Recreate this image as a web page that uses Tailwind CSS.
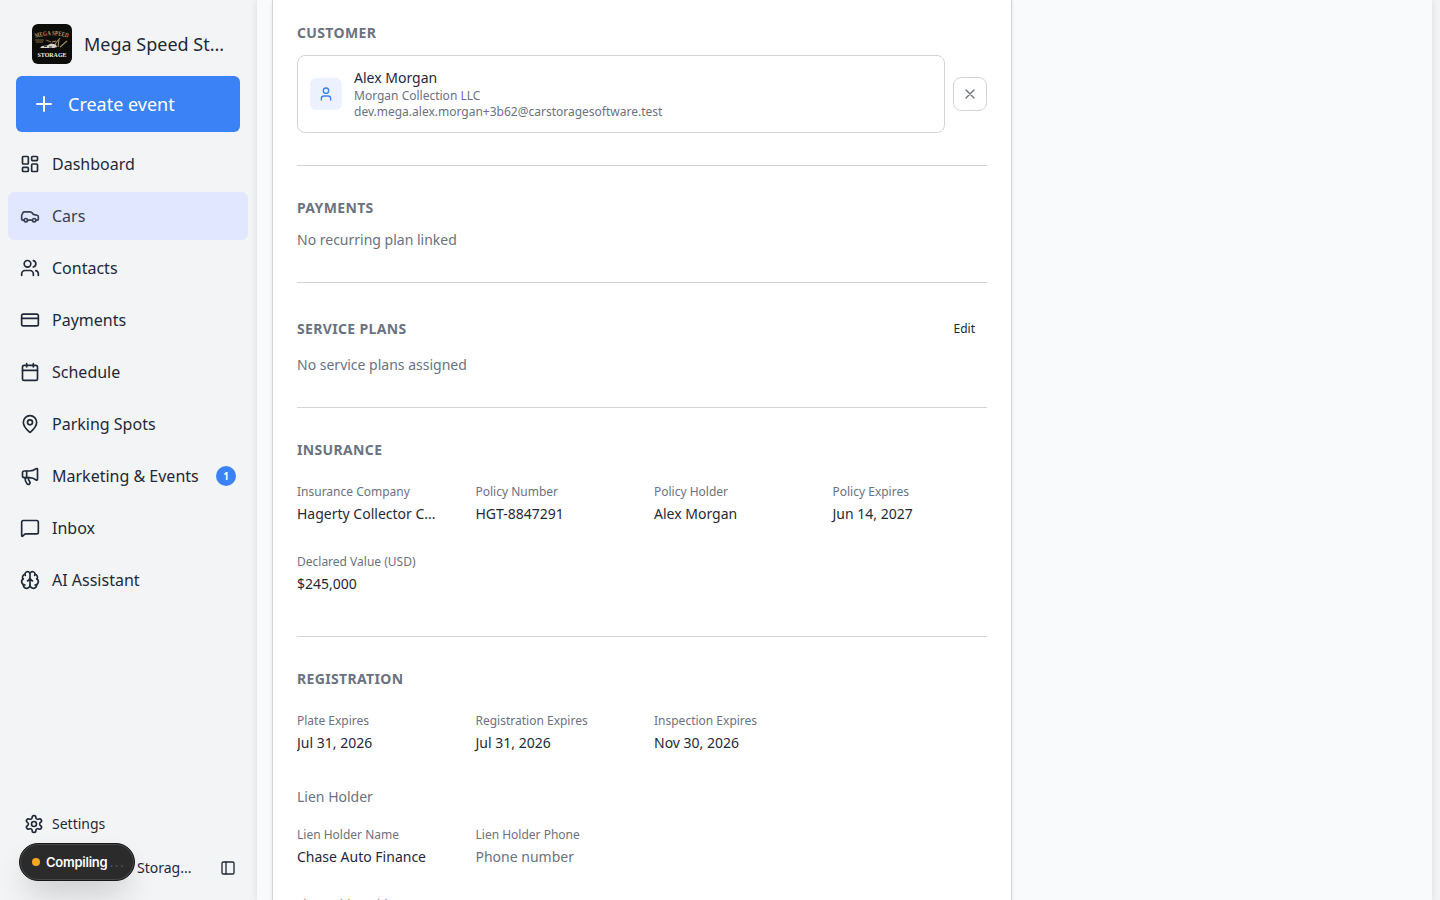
<!DOCTYPE html>
<html lang="en">
<head>
<meta charset="utf-8">
<title>Mega Speed Storage</title>
<script src="https://cdn.jsdelivr.net/npm/@tailwindcss/browser@4"></script>
</head>
<body class="h-[900px] w-[1440px] overflow-hidden bg-[#f3f4f6] font-['Noto_Sans',sans-serif] text-[#1f2937]">
<div class="flex h-[900px] overflow-hidden">
  <aside class="relative flex h-full w-[257px] shrink-0 flex-col">
    <div class="flex h-[76px] items-center gap-3 pt-3 pl-8">
      <svg class="size-10 rounded-md" viewBox="0 0 40 40">
        <rect width="40" height="40" fill="#0c0c09"/>
        <path id="arc" d="M3.500 14Q20 8.500 36.500 14" fill="none"/>
        <text font-family="Liberation Serif, serif" font-weight="700" font-size="6.600" fill="#b89a63"><textPath href="#arc" textLength="33" lengthAdjust="spacingAndGlyphs">MEGA&#160;SPEED</textPath></text>
        <path d="M3 16h9M4 18h7M14 16l5 2" stroke="#7d6840" stroke-width="1.200"/>
        <path d="M8 24l2-2 5-.5 4-2 5 1 1 2.500-3 1H9z" fill="#d6d2c8"/>
        <path d="M12 22.500h3M17 23h3" stroke="#333" stroke-width="1"/>
        <path d="M23 20l5-6M26 23l1-8M28 23l7-6M20 18l4-1" stroke="#a08a5c" stroke-width="1.100"/>
        <text x="5.500" y="33" font-family="Liberation Serif, serif" font-weight="700" font-size="6.800" fill="#eeeeea" textLength="29" lengthAdjust="spacingAndGlyphs">STORAGE</text>
      </svg>
      <span class="text-lg">Mega Speed St...</span>
    </div>
    <button class="mx-4 flex h-14 w-56 shrink-0 items-center gap-3 rounded-md bg-[#3b82f6] px-4 text-lg text-white">
      <svg class="size-6" viewBox="0 0 24 24" fill="none" stroke="currentColor" stroke-width="2" stroke-linecap="round"><path d="M5 12h14M12 5v14"/></svg>
      <span>Create event</span>
    </button>
    <nav class="mt-2 flex w-64 flex-col gap-1 px-2">
      <a class="flex h-12 items-center gap-3 rounded-md px-3">
        <svg class="size-5" viewBox="0 0 24 24" fill="none" stroke="currentColor" stroke-width="2" stroke-linecap="round" stroke-linejoin="round"><rect width="7" height="9" x="3" y="3" rx="1"/><rect width="7" height="5" x="14" y="3" rx="1"/><rect width="7" height="9" x="14" y="12" rx="1"/><rect width="7" height="5" x="3" y="16" rx="1"/></svg>
        <span>Dashboard</span></a>
      <a class="flex h-12 items-center gap-3 rounded-md bg-[#e0e7ff] px-3 text-[#374151]">
        <svg class="size-5" viewBox="0 0 24 24" fill="none" stroke="currentColor" stroke-width="2" stroke-linecap="round" stroke-linejoin="round"><path d="M19 17h2c.6 0 1-.4 1-1v-3c0-.9-.7-1.700-1.500-1.900C18.700 10.600 16 10 16 10s-1.300-1.400-2.200-2.300c-.5-.4-1.100-.7-1.800-.7H5c-.6 0-1.100.4-1.400.9l-1.400 2.900A3.700 3.700 0 0 0 2 12v4c0 .6.4 1 1 1h2"/><circle cx="7" cy="17" r="2"/><path d="M9 17h6"/><circle cx="17" cy="17" r="2"/></svg>
        <span>Cars</span></a>
      <a class="flex h-12 items-center gap-3 rounded-md px-3">
        <svg class="size-5" viewBox="0 0 24 24" fill="none" stroke="currentColor" stroke-width="2" stroke-linecap="round" stroke-linejoin="round"><path d="M16 21v-2a4 4 0 0 0-4-4H6a4 4 0 0 0-4 4v2"/><circle cx="9" cy="7" r="4"/><path d="M22 21v-2a4 4 0 0 0-3-3.870M16 3.130a4 4 0 0 1 0 7.750"/></svg>
        <span>Contacts</span></a>
      <a class="flex h-12 items-center gap-3 rounded-md px-3">
        <svg class="size-5" viewBox="0 0 24 24" fill="none" stroke="currentColor" stroke-width="2" stroke-linecap="round" stroke-linejoin="round"><rect width="20" height="14" x="2" y="5" rx="2"/><path d="M2 10h20"/></svg>
        <span>Payments</span></a>
      <a class="flex h-12 items-center gap-3 rounded-md px-3">
        <svg class="size-5" viewBox="0 0 24 24" fill="none" stroke="currentColor" stroke-width="2" stroke-linecap="round" stroke-linejoin="round"><path d="M8 2v4M16 2v4M3 10h18"/><rect width="18" height="18" x="3" y="4" rx="2"/></svg>
        <span>Schedule</span></a>
      <a class="flex h-12 items-center gap-3 rounded-md px-3">
        <svg class="size-5" viewBox="0 0 24 24" fill="none" stroke="currentColor" stroke-width="2" stroke-linecap="round" stroke-linejoin="round"><path d="M20 10c0 4.993-5.539 10.193-7.399 11.799a1 1 0 0 1-1.202 0C9.539 20.193 4 14.993 4 10a8 8 0 0 1 16 0"/><circle cx="12" cy="10" r="3"/></svg>
        <span>Parking Spots</span></a>
      <a class="flex h-12 items-center gap-3 rounded-md px-3">
        <svg class="size-5" viewBox="0 0 24 24" fill="none" stroke="currentColor" stroke-width="2" stroke-linecap="round" stroke-linejoin="round"><path d="M11 6a13 13 0 0 0 8.400-2.800A1 1 0 0 1 21 4v12a1 1 0 0 1-1.600.8A13 13 0 0 0 11 14H5a2 2 0 0 1-2-2V8a2 2 0 0 1 2-2z"/><path d="M6 14a12 12 0 0 0 2.400 7.200 2 2 0 0 0 3.200-2.400A8 8 0 0 1 10 14M8 6v8"/></svg>
        <span class="flex-1">Marketing &amp; Events</span>
        <span class="flex size-5 items-center justify-center rounded-full bg-[#3b82f6] text-[10px] font-bold text-white">1</span></a>
      <a class="flex h-12 items-center gap-3 rounded-md px-3">
        <svg class="size-5" viewBox="0 0 24 24" fill="none" stroke="currentColor" stroke-width="2" stroke-linecap="round" stroke-linejoin="round"><path d="M22 17a2 2 0 0 1-2 2H6.828a2 2 0 0 0-1.414.586l-2.202 2.202A.71.71 0 0 1 2 21.286V5a2 2 0 0 1 2-2h16a2 2 0 0 1 2 2z"/></svg>
        <span>Inbox</span></a>
      <a class="flex h-12 items-center gap-3 rounded-md px-3">
        <svg class="size-5" viewBox="0 0 24 24" fill="none" stroke="currentColor" stroke-width="2" stroke-linecap="round" stroke-linejoin="round"><path d="M12 18V5M15 13a4.170 4.170 0 0 1-3-4 4.170 4.170 0 0 1-3 4M17.598 6.500A3 3 0 1 0 12 5a3 3 0 1 0-5.598 1.500"/><path d="M17.997 5.125a4 4 0 0 1 2.526 5.770"/><path d="M18 18a4 4 0 0 0 2-7.464"/><path d="M19.967 17.483A4 4 0 1 1 12 18a4 4 0 1 1-7.967-.517"/><path d="M6 18a4 4 0 0 1-2-7.464"/><path d="M6.003 5.125a4 4 0 0 0-2.526 5.770"/></svg>
        <span>AI Assistant</span></a>
    </nav>
    <div class="mt-auto flex h-10 items-center gap-2 pl-6 text-sm">
      <svg class="size-5" viewBox="0 0 24 24" fill="none" stroke="currentColor" stroke-width="2" stroke-linecap="round" stroke-linejoin="round"><path d="M12.220 2h-.44a2 2 0 0 0-2 2v.18a2 2 0 0 1-1 1.730l-.43.25a2 2 0 0 1-2 0l-.15-.08a2 2 0 0 0-2.730.73l-.22.38a2 2 0 0 0 .73 2.730l.15.1a2 2 0 0 1 1 1.720v.51a2 2 0 0 1-1 1.740l-.15.09a2 2 0 0 0-.73 2.730l.22.38a2 2 0 0 0 2.730.73l.15-.08a2 2 0 0 1 2 0l.43.25a2 2 0 0 1 1 1.730V20a2 2 0 0 0 2 2h.44a2 2 0 0 0 2-2v-.18a2 2 0 0 1 1-1.730l.43-.25a2 2 0 0 1 2 0l.15.08a2 2 0 0 0 2.730-.73l.22-.39a2 2 0 0 0-.73-2.730l-.15-.08a2 2 0 0 1-1-1.740v-.5a2 2 0 0 1 1-1.740l.15-.09a2 2 0 0 0 .73-2.730l-.22-.38a2 2 0 0 0-2.730-.73l-.15.08a2 2 0 0 1-2 0l-.43-.25a2 2 0 0 1-1-1.730V4a2 2 0 0 0-2-2z"/><circle cx="12" cy="12" r="3"/></svg>
      <span>Settings</span>
    </div>
    <div class="mb-3 flex h-11 items-center justify-between pt-1 pr-[21px] pl-[137px] text-sm">
      <span>Storag...</span>
      <svg class="size-4" viewBox="0 0 24 24" fill="none" stroke="currentColor" stroke-width="2" stroke-linecap="round" stroke-linejoin="round"><rect width="18" height="18" x="3" y="3" rx="2"/><path d="M9 3v18"/></svg>
    </div>
    <!-- Build status pill floating over the sidebar footer -->
    <div class="absolute top-[843px] left-[19px] flex h-[38px] w-[116px] items-center rounded-full border border-[#171717] bg-[#2b2b2b] pl-3 font-['Inter',sans-serif] text-[13px] text-white shadow-[inset_0_0_0_1px_#484848,0_16px_32px_-8px_rgba(0,0,0,0.24)]">
      <span class="mr-1.5 size-2 rounded-full bg-[#f5a623]"></span><span class="pt-0.5 font-semibold tracking-[-0.24px]">Compiling</span><span class="ml-0.5 pt-0.5 tracking-[1.500px] text-[#555]">...</span>
    </div>
  </aside>
  <main class="h-full w-[1175px] shrink-0 bg-[#f9fafb] pl-[15px] shadow-[0_0_8px_rgba(0,0,0,0.1)]">
    <div class="h-[1000px] w-[740px] border-x border-[#d1d5db] bg-white px-6 shadow-[0_1px_3px_rgba(0,0,0,0.1)]">
      <section class="border-b border-[#d1d5db] pt-[23px] pb-8">
        <h3 class="text-sm font-bold tracking-[0.35px] text-[#6b7280]">CUSTOMER</h3>
        <div class="mt-3 flex items-center gap-2">
          <div class="flex h-[78px] flex-1 items-center gap-3 rounded-lg border border-[#d1d5db] px-3">
            <div class="flex size-8 items-center justify-center rounded-md bg-[#ebf2fe] text-[#3b82f6]">
              <svg class="size-4" viewBox="0 0 24 24" fill="none" stroke="currentColor" stroke-width="2" stroke-linecap="round" stroke-linejoin="round"><path d="M19 21v-2a4 4 0 0 0-4-4H9a4 4 0 0 0-4 4v2"/><circle cx="12" cy="7" r="4"/></svg>
            </div>
            <div>
              <p class="text-sm">Alex Morgan</p>
              <p class="text-xs text-[#6b7280]">Morgan Collection LLC</p>
              <p class="text-xs text-[#6b7280]">dev.mega.alex.morgan+3b62@carstoragesoftware.test</p>
            </div>
          </div>
          <button class="flex size-[34px] items-center justify-center rounded-lg border border-[#d1d5db] text-[#6b7280]">
            <svg class="size-4" viewBox="0 0 24 24" fill="none" stroke="currentColor" stroke-width="2" stroke-linecap="round"><path d="M18 6 6 18M6 6l12 12"/></svg>
          </button>
        </div>
      </section>
      <section class="border-b border-[#d1d5db] py-8">
        <h3 class="text-sm font-bold tracking-[0.35px] text-[#6b7280]">PAYMENTS</h3>
        <p class="mt-3 text-sm text-[#6b7280]">No recurring plan linked</p>
      </section>
      <section class="border-b border-[#d1d5db] py-8">
        <div class="flex h-7 items-center justify-between">
          <h3 class="text-sm font-bold tracking-[0.35px] text-[#6b7280]">SERVICE PLANS</h3>
          <button class="px-3 text-xs">Edit</button>
        </div>
        <p class="mt-3 text-sm text-[#6b7280]">No service plans assigned</p>
      </section>
      <section class="border-b border-[#d1d5db] pt-8 pb-[42px]">
        <h3 class="text-sm font-bold tracking-[0.35px] text-[#6b7280]">INSURANCE</h3>
        <dl class="mt-6 grid grid-cols-4 gap-x-6 gap-y-[30px] text-sm">
          <div><dt class="mb-1 text-xs text-[#6b7280]">Insurance Company</dt><dd class="whitespace-nowrap">Hagerty Collector C...</dd></div>
          <div><dt class="mb-1 text-xs text-[#6b7280]">Policy Number</dt><dd>HGT-8847291</dd></div>
          <div><dt class="mb-1 text-xs text-[#6b7280]">Policy Holder</dt><dd>Alex Morgan</dd></div>
          <div><dt class="mb-1 text-xs text-[#6b7280]">Policy Expires</dt><dd>Jun 14, 2027</dd></div>
          <div><dt class="mb-1 text-xs text-[#6b7280]">Declared Value (USD)</dt><dd>$245,000</dd></div>
        </dl>
      </section>
      <section class="pt-8">
        <h3 class="text-sm font-bold tracking-[0.35px] text-[#6b7280]">REGISTRATION</h3>
        <dl class="mt-6 grid grid-cols-4 gap-x-6 text-sm">
          <div><dt class="mb-1 text-xs text-[#6b7280]">Plate Expires</dt><dd class="overflow-hidden">Jul 31, 2026</dd></div>
          <div><dt class="mb-1 text-xs text-[#6b7280]">Registration Expires</dt><dd>Jul 31, 2026</dd></div>
          <div><dt class="mb-1 text-xs text-[#6b7280]">Inspection Expires</dt><dd>Nov 30, 2026</dd></div>
        </dl>
        <h4 class="mt-[34px] text-sm text-[#6b7280]">Lien Holder</h4>
        <dl class="mt-5 grid grid-cols-4 gap-x-6 gap-y-[30px] text-sm">
          <div><dt class="mb-1 text-xs text-[#6b7280]">Lien Holder Name</dt><dd>Chase Auto Finance</dd></div>
          <div><dt class="mb-1 text-xs text-[#6b7280]">Lien Holder Phone</dt><dd class="text-[#6b7280]">Phone number</dd></div>
          <div class="col-start-1"><dt class="text-xs text-[#6b7280]">Lien Holder Address</dt></div>
        </dl>
      </section>
    </div>
  </main>
</div>
</body>
</html>
